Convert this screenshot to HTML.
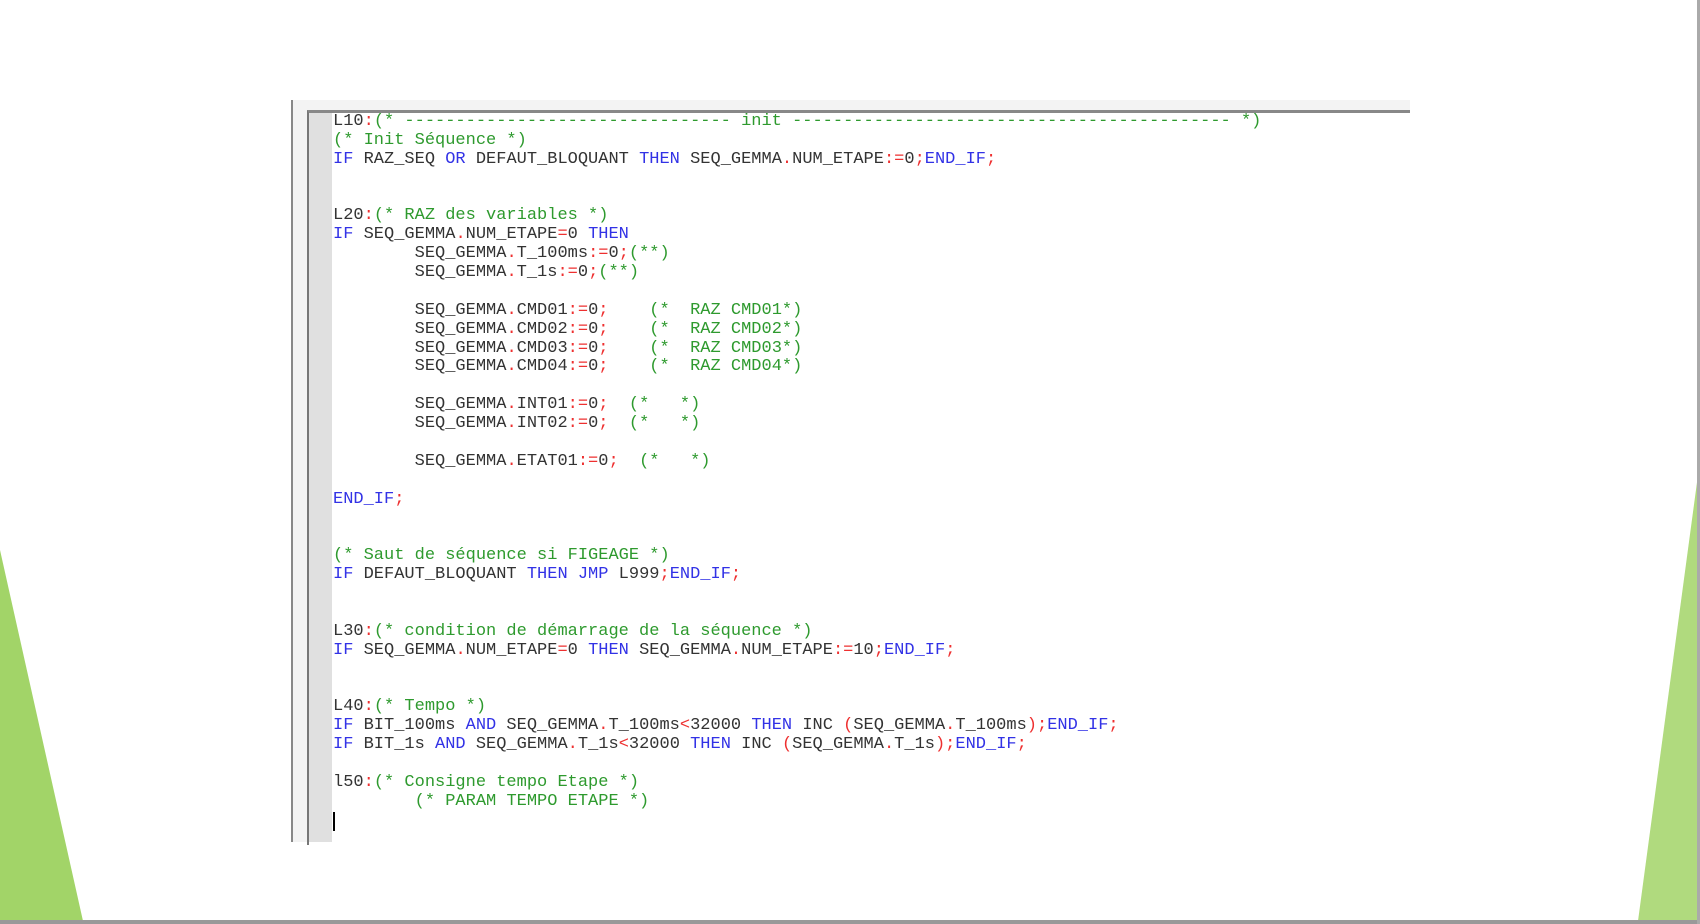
<!DOCTYPE html>
<html><head><meta charset="utf-8"><style>
html,body{margin:0;padding:0;width:1700px;height:924px;background:#fff;overflow:hidden;position:relative}
.a{position:absolute}
pre{margin:0;font-family:"Liberation Mono","Courier New",monospace;font-size:17px;line-height:18.87px;color:#333;position:absolute;left:333px;top:113px}
.k{color:#3232e6}.o{color:#ee3030}.c{color:#2e9a2e}
</style></head><body>
<svg class="a" style="left:0;top:0" width="1700" height="924">
<polygon points="0,550 0,921 83,921" fill="#a2d468"/>
<polygon points="1700,460 1700,921 1638,921" fill="#b0da7e"/>
<rect x="0" y="920" width="1700" height="4" fill="#999"/>
<rect x="1697" y="0" width="3" height="924" fill="#aaa"/>
</svg>
<div class="a" style="left:291px;top:100px;width:1117px;height:742px;background:#f3f3f3;border-left:2px solid #888"></div>
<div class="a" style="left:307px;top:110px;width:1101px;height:732px;background:#fff;border-left:2px solid #777;border-top:3px solid #888"></div>
<div class="a" style="left:309px;top:113px;width:23px;height:729px;background:#e0e0e0"></div>
<div class="a" style="left:333px;top:812px;width:2px;height:19px;background:#000"></div>
<pre>L10<span class="o">:</span><span class="c">(* -------------------------------- init ------------------------------------------- *)</span>
<span class="c">(* Init Séquence *)</span>
<span class="k">IF</span> RAZ_SEQ <span class="k">OR</span> DEFAUT_BLOQUANT <span class="k">THEN</span> SEQ_GEMMA<span class="o">.</span>NUM_ETAPE<span class="o">:=</span>0<span class="o">;</span><span class="k">END_IF</span><span class="o">;</span>


L20<span class="o">:</span><span class="c">(* RAZ des variables *)</span>
<span class="k">IF</span> SEQ_GEMMA<span class="o">.</span>NUM_ETAPE<span class="o">=</span>0 <span class="k">THEN</span>
        SEQ_GEMMA<span class="o">.</span>T_100ms<span class="o">:=</span>0<span class="o">;</span><span class="c">(**)</span>
        SEQ_GEMMA<span class="o">.</span>T_1s<span class="o">:=</span>0<span class="o">;</span><span class="c">(**)</span>

        SEQ_GEMMA<span class="o">.</span>CMD01<span class="o">:=</span>0<span class="o">;</span>    <span class="c">(*  RAZ CMD01*)</span>
        SEQ_GEMMA<span class="o">.</span>CMD02<span class="o">:=</span>0<span class="o">;</span>    <span class="c">(*  RAZ CMD02*)</span>
        SEQ_GEMMA<span class="o">.</span>CMD03<span class="o">:=</span>0<span class="o">;</span>    <span class="c">(*  RAZ CMD03*)</span>
        SEQ_GEMMA<span class="o">.</span>CMD04<span class="o">:=</span>0<span class="o">;</span>    <span class="c">(*  RAZ CMD04*)</span>

        SEQ_GEMMA<span class="o">.</span>INT01<span class="o">:=</span>0<span class="o">;</span>  <span class="c">(*   *)</span>
        SEQ_GEMMA<span class="o">.</span>INT02<span class="o">:=</span>0<span class="o">;</span>  <span class="c">(*   *)</span>

        SEQ_GEMMA<span class="o">.</span>ETAT01<span class="o">:=</span>0<span class="o">;</span>  <span class="c">(*   *)</span>

<span class="k">END_IF</span><span class="o">;</span>


<span class="c">(* Saut de séquence si FIGEAGE *)</span>
<span class="k">IF</span> DEFAUT_BLOQUANT <span class="k">THEN</span> <span class="k">JMP</span> L999<span class="o">;</span><span class="k">END_IF</span><span class="o">;</span>


L30<span class="o">:</span><span class="c">(* condition de démarrage de la séquence *)</span>
<span class="k">IF</span> SEQ_GEMMA<span class="o">.</span>NUM_ETAPE<span class="o">=</span>0 <span class="k">THEN</span> SEQ_GEMMA<span class="o">.</span>NUM_ETAPE<span class="o">:=</span>10<span class="o">;</span><span class="k">END_IF</span><span class="o">;</span>


L40<span class="o">:</span><span class="c">(* Tempo *)</span>
<span class="k">IF</span> BIT_100ms <span class="k">AND</span> SEQ_GEMMA<span class="o">.</span>T_100ms<span class="o">&lt;</span>32000 <span class="k">THEN</span> INC <span class="o">(</span>SEQ_GEMMA<span class="o">.</span>T_100ms<span class="o">);</span><span class="k">END_IF</span><span class="o">;</span>
<span class="k">IF</span> BIT_1s <span class="k">AND</span> SEQ_GEMMA<span class="o">.</span>T_1s<span class="o">&lt;</span>32000 <span class="k">THEN</span> INC <span class="o">(</span>SEQ_GEMMA<span class="o">.</span>T_1s<span class="o">);</span><span class="k">END_IF</span><span class="o">;</span>

l50<span class="o">:</span><span class="c">(* Consigne tempo Etape *)</span>
        <span class="c">(* PARAM TEMPO ETAPE *)</span>
</pre>
</body></html>
